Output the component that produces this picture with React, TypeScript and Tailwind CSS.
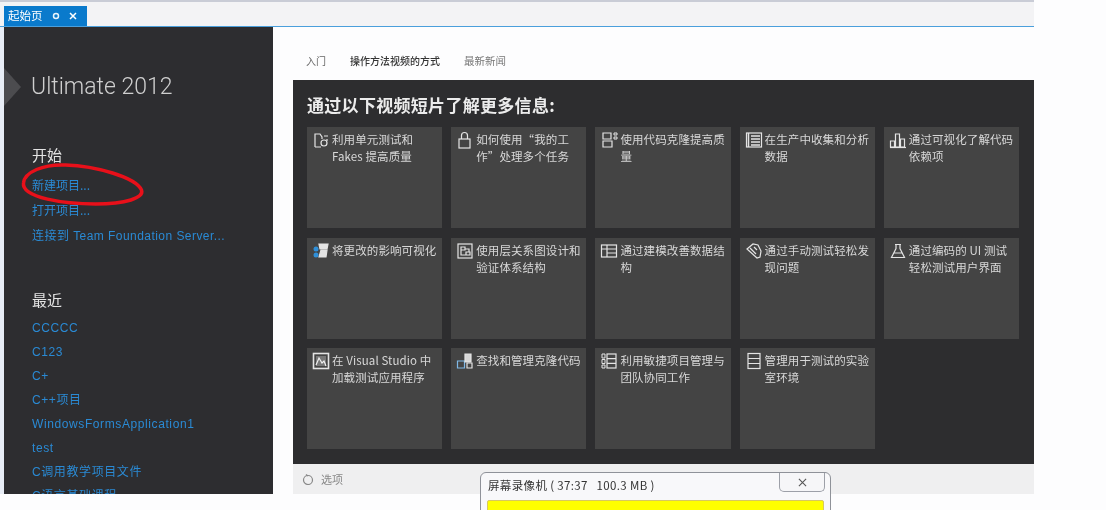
import type { ReactNode } from "react";

const cjk = "font-['Noto_Sans_CJK_SC','Noto_Sans',sans-serif]";

const Ico = ({ children }: { children: ReactNode }) => (
    <svg viewBox="0 0 18 18" fill="none" stroke="#e4e4e4" strokeWidth="1.2" className="w-[18px] h-[18px] shrink-0">
        {children}
    </svg>
);

const cards: { text: string; icon: ReactNode }[] = [
    {
        text: "利用单元测试和 Fakes 提高质量",
        icon: (
            <Ico>
                <path d="M3 16V3h5l2 3v2M3 16h6" />
                <circle cx="12" cy="12" r="3" />
                <path d="M12 5h4M15 8v2" />
            </Ico>
        ),
    },
    {
        text: "如何使用“我的工作”处理多个任务",
        icon: (
            <Ico>
                <rect x="3" y="8" width="11" height="9" />
                <path d="M5.5 8V4.5a3 3 0 0 1 6 0V8" />
            </Ico>
        ),
    },
    {
        text: "使用代码克隆提高质量",
        icon: (
            <Ico>
                <path d="M3 2h8v6H3zM3 10h9v6H3z" />
                <path d="M14 2h3v2h-3zM14 6h3v2h-3z" strokeWidth="1" />
            </Ico>
        ),
    },
    {
        text: "在生产中收集和分析数据",
        icon: (
            <Ico>
                <rect x="1.5" y="2" width="15" height="14" />
                <path d="M6 5h9M6 8h9M6 11h9M6 14h9M3.5 2v14" strokeWidth="1.5" />
            </Ico>
        ),
    },
    {
        text: "通过可视化了解代码依赖项",
        icon: (
            <Ico>
                <path d="M1.500 16V10h4v6zM6.500 16V3h4v13zM11.500 16V8h4v8z" />
                <path d="M1 16.500h16" />
            </Ico>
        ),
    },
    {
        text: "将更改的影响可视化",
        icon: (
            <Ico>
                <path d="M7 2h9l-1 5H8z" fill="#e4e4e4" />
                <path d="M9 8h6l-1 7H7z" fill="#e4e4e4" />
                <circle cx="4" cy="7" r="2.500" fill="#2f8fd8" stroke="none" />
                <circle cx="4" cy="13" r="2.500" fill="#2f8fd8" stroke="none" />
            </Ico>
        ),
    },
    {
        text: "使用层关系图设计和验证体系结构",
        icon: (
            <Ico>
                <rect x="2" y="2" width="14" height="14" />
                <path d="M5 5h4v3H5zM10 10h4v3h-4zM9 7h4v3M5 8v5h5" />
            </Ico>
        ),
    },
    {
        text: "通过建模改善数据结构",
        icon: (
            <Ico>
                <rect x="1.500" y="3" width="15" height="12" />
                <path d="M1.500 7h15M7 3v12M7 11h9.500" />
            </Ico>
        ),
    },
    {
        text: "通过手动测试轻松发现问题",
        icon: (
            <Ico>
                <path d="M2 7l6-5 5 1 3 6-1 6-3 1z" />
                <path d="M5 6l6 6M9 5l3 3" />
            </Ico>
        ),
    },
    {
        text: "通过编码的 UI 测试轻松测试用户界面",
        icon: (
            <Ico>
                <path d="M6 2.500h6M7 2.500v4L2.500 15.500h13L11 6.500v-4M5 11h8" />
            </Ico>
        ),
    },
    {
        text: "在 Visual Studio 中加载测试应用程序",
        icon: (
            <Ico>
                <rect x="1.500" y="1.500" width="15" height="15" strokeWidth="1.600" />
                <path d="M4 4h10v10H4z" fill="#777" stroke="none" />
                <path d="M4 13l3-7 3 5 2-2 2 5" stroke="#f0f0f0" />
            </Ico>
        ),
    },
    {
        text: "查找和管理克隆代码",
        icon: (
            <Ico>
                <path d="M1.500 9h7v7h-7z" stroke="#7fb8e6" />
                <path d="M9 2h6v8H9z" fill="#d8d8d8" />
                <path d="M11 11h5v5h-5z" stroke="#e4e4e4" />
            </Ico>
        ),
    },
    {
        text: "利用敏捷项目管理与团队协同工作",
        icon: (
            <Ico>
                <rect x="7" y="2" width="9" height="14" />
                <path d="M7 6.700h9M7 11.300h9" />
                <path d="M2 2h3v4H2zM2 7.500h3v4H2zM2 13h3v3H2z" strokeWidth="1" />
            </Ico>
        ),
    },
    {
        text: "管理用于测试的实验室环境",
        icon: (
            <Ico>
                <rect x="3" y="1.500" width="12" height="15" />
                <path d="M3 6.500h12M3 11.500h12" />
            </Ico>
        ),
    },
];

const recent = ["CCCCC", "C123", "C+", "C++项目", "WindowsFormsApplication1", "test", "C调用教学项目文件", "C语言基础课程"];

export default function App() {
    return (
        <div className={`relative w-[1106px] h-[510px] overflow-hidden bg-[#fdfdfe] blur-[0.4px] ${cjk}`}>
            <div className="flex flex-col w-[1034px] h-[494px]">
                <div className="h-[2px] bg-[#c9ccd6]" />
                <div className="flex items-end h-[24px] pl-[4px] bg-[#f3f3f5]">
                    <div className="flex items-center w-[83px] h-[20px] pl-[4px] bg-[#0a7acc] text-white text-[11.500px]">
                        <span>起始页</span>
                        <svg viewBox="0 0 8 8" className="w-[8px] h-[8px] ml-[9px]" fill="none" stroke="#e8f3fb" strokeWidth="1.500">
                            <circle cx="4" cy="4" r="2.500" />
                        </svg>
                        <svg viewBox="0 0 8 8" className="w-[8px] h-[8px] ml-[9px]" fill="none" stroke="#ffffff" strokeWidth="1.500">
                            <path d="M1 1l6 6M7 1l-6 6" />
                        </svg>
                    </div>
                </div>
                <div className="h-[1px] bg-[#4a9fdc]" />
                <div className="flex flex-1 min-h-0 bg-[#fdfdfe]">
                    <div className="w-[4px] bg-[#e8edf6]" />
                    <div className="flex flex-col w-[269px] overflow-hidden bg-[#2d2d30]">
                        <div className="flex items-center mt-[41px] h-[38px]">
                            <svg viewBox="0 0 17 38" className="w-[17px] h-[38px] shrink-0" fill="#4c4c4f">
                                <path d="M0 0l17 19L0 38z" />
                            </svg>
                            <span className="ml-[10px] text-[23px] font-light text-[#cfcfcf] font-['Roboto',sans-serif] whitespace-nowrap">
                                Ultimate 2012
                            </span>
                        </div>
                        <div className="pl-[28px]">
                            <div className="mt-[38px] h-[22px] leading-[22px] text-[15px] text-[#e4e4e4]">开始</div>
                            <div className="mt-[6px] flex flex-col text-[12px] text-[#2a8ad4]">
                                <span className="h-[25px] leading-[25px]">新建项目...</span>
                                <span className="h-[25px] leading-[25px]">打开项目...</span>
                                <span className="h-[25px] leading-[29px] tracking-[0.45px] font-['Liberation_Sans','Noto_Sans_CJK_SC',sans-serif] whitespace-nowrap">
                                    连接到 Team Foundation Server...
                                </span>
                            </div>
                            <div className="mt-[42px] h-[22px] leading-[22px] text-[15px] text-[#e4e4e4]">最近</div>
                            <div className="mt-[5px] flex flex-col text-[12px] tracking-[0.6px] text-[#2a8ad4] font-['Liberation_Sans','Noto_Sans_CJK_SC',sans-serif]">
                                {recent.map((name) => (
                                    <span key={name} className="h-[24px] leading-[24px] shrink-0 whitespace-nowrap">
                                        {name}
                                    </span>
                                ))}
                            </div>
                        </div>
                    </div>
                    <div className="flex flex-col flex-1 ml-[20px] min-w-0">
                        <div className="flex items-center gap-[24px] h-[53px] pt-[14px] pl-[13px] text-[10px] text-[#666]">
                            <span>入门</span>
                            <span className="text-[#333] font-medium">操作方法视频的方式</span>
                            <span className="text-[10.500px] text-[#777]">最新新闻</span>
                        </div>
                        <div className="h-[384px] pt-[15px] pl-[14px] pr-[15px] bg-[#2d2d2f]">
                            <h1 className="h-[20px] leading-[20px] text-[17px] tracking-[0.3px] font-bold text-[#ececec]">通过以下视频短片了解更多信息:</h1>
                            <div className="grid grid-cols-5 auto-rows-[101px] gap-x-[9px] gap-y-[9.500px] mt-[12px]">
                                {cards.map((card) => (
                                    <div key={card.text} className="flex gap-[2px] pt-[4px] pl-[5px] pr-[4px] bg-[#444444] text-[11.500px] tracking-[0.1px] leading-[17px] text-[#d8d8d8]">
                                        {card.icon}
                                        <p className="min-w-0">{card.text}</p>
                                    </div>
                                ))}
                            </div>
                        </div>
                        <div className="flex flex-1 items-center gap-[7px] pl-[9px] bg-[#efeff0] text-[11px] text-[#888]">
                            <svg viewBox="0 0 12 12" className="w-[12px] h-[12px]" fill="none" stroke="#888" strokeWidth="1.200">
                                <circle cx="6" cy="7" r="4.500" />
                                <path d="M4 1.500l2 1.500" />
                            </svg>
                            <span>选项</span>
                        </div>
                    </div>
                </div>
            </div>

            {/* annotation ring drawn over the link */}
            <svg viewBox="0 0 1106 510" className="absolute inset-0 w-[1106px] h-[510px] pointer-events-none" fill="none">
                <path
                    d="M23.500 183c1-11 20-19 42-18 30 1 70 12 76 25 3 8-16 14-46 14-30 0-74-6-72-21z"
                    stroke="#e8101a"
                    strokeWidth="3.500"
                />
            </svg>

            {/* recorder window floating above the page */}
            <div className="absolute left-[480px] top-[472px] w-[351px] h-[50px] rounded-t-[6px] border border-[#8f9299] bg-[#f8f8fa]">
                <div className="absolute right-[5px] top-0 flex items-center justify-center w-[46px] h-[19px] rounded-b-[5px] border border-t-0 border-[#9da0a8] bg-[#f6f6f8]">
                    <svg viewBox="0 0 10 10" className="w-[9px] h-[9px]" fill="none" stroke="#555" strokeWidth="1.200">
                        <path d="M1 1l8 8M9 1l-8 8" />
                    </svg>
                </div>
                <div className="pl-[7px] pt-[3px] h-[27px] leading-[19px] text-[11.500px] tracking-[0.35px] text-[#333] whitespace-nowrap">
                    屏幕录像机 ( 37:37&nbsp;&nbsp;&nbsp;100.3 MB )
                </div>
                <div className="mx-[6px] h-[30px] rounded-[2px] border border-[#d8c860] bg-[#ffff00]" />
            </div>
        </div>
    );
}
